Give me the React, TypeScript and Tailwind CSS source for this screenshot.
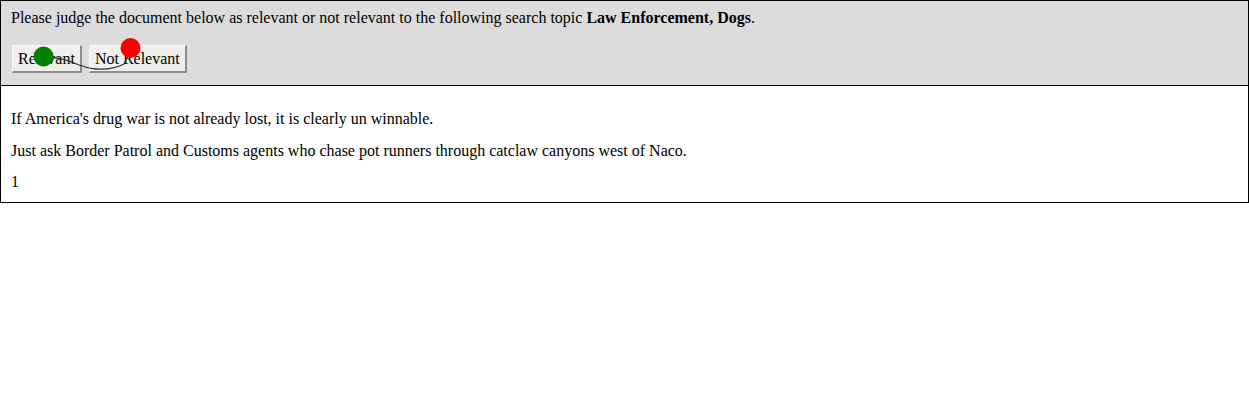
import React from "react";

function JudgeButton({ label }: { label: string }) {
  return (
    <button className="h-[28px] px-[5px] bg-[#f0efeb] border-t border-l border-b-2 border-r-2 border-t-[#fafafa] border-l-[#fafafa] border-b-[#8c8c8c] border-r-[#8c8c8c] text-[16px] leading-[18px] text-black">
      {label}
    </button>
  );
}

export default function App() {
  return (
    <div className="relative w-full bg-white font-['Liberation_Serif',serif] text-black text-[16px]">
      <div className="border border-black">
        {/* Topic + judgement buttons */}
        <div className="bg-[#dcdcdc] px-[10px] pt-[8px] pb-[12px] border-b border-black">
          <div className="leading-[18px]">
            Please judge the document below as relevant or not relevant to the following search topic{" "}
            <b>Law Enforcement, Dogs</b>.
          </div>
          <div className="flex gap-[7px] mt-[18px] ml-[1px]">
            <JudgeButton label="Relevant" />
            <JudgeButton label="Not Relevant" />
          </div>
        </div>

        {/* Document body */}
        <div className="px-[10px] pt-[24px] pb-[11px] leading-[18px]">
          <p>If America's drug war is not already lost, it is clearly un winnable.</p>
          <p className="mt-[14px]">
            Just ask Border Patrol and Customs agents who chase pot runners through catclaw canyons west of Naco.
          </p>
          <div className="mt-[13px]">1</div>
        </div>
      </div>

      {/* gaze trail overlay */}
      <svg className="absolute left-0 top-0 pointer-events-none" width="200" height="85">
        <path
          d="M44 57 C70 57 78 68 96 69 C108 70 118 67 124 64 L128 56"
          fill="none"
          stroke="#333"
          strokeWidth="1.3"
        />
        <circle cx="43.5" cy="56.5" r="10" fill="#008000" />
        <circle cx="130.5" cy="48" r="10" fill="#ff0000" />
      </svg>
    </div>
  );
}
